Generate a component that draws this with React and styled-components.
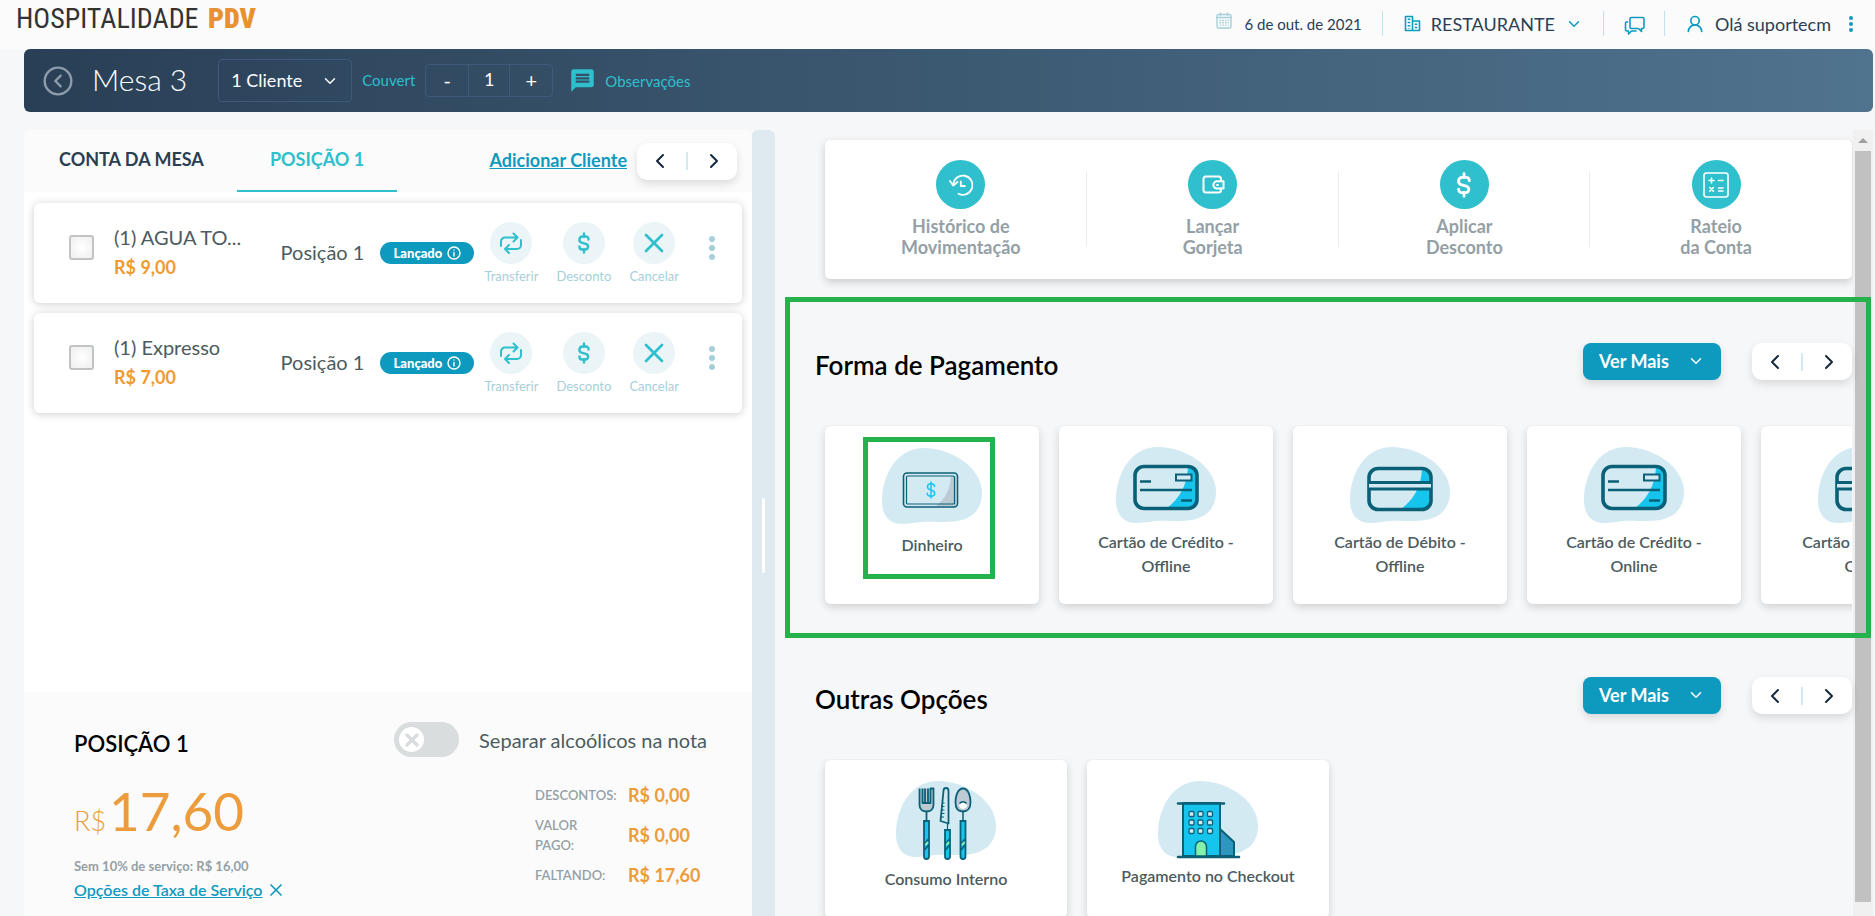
import React, { useState } from "react";
import styled, { createGlobalStyle, css } from "styled-components";
import { ChevronDown, ChevronLeft, ChevronRight, CircleChevronLeft, UserRound, X } from "lucide-react";
import { MdMessage } from "react-icons/md";

const colors = {
  page: "#f5f7f9",
  soft: "#fbfbfb",
  navy: "#2a3f54",
  teal: "#2fbfcd",
  blue: "#0e9abf",
  orange: "#ec9c3b",
  text: "#4b5b60",
  muted: "#94a0a6",
  pale: "#a5d0da",
  ink: "#0a6076",
  blob: "#d4eaf3",
  cyan: "#16c5ee",
  mark: "#24b24c",
};

const items = [
  { id: 1, name: "(1) AGUA TO...", price: "R$ 9,00" },
  { id: 2, name: "(1) Expresso", price: "R$ 7,00" },
];

const totals = [
  { label: "DESCONTOS:", value: "R$ 0,00" },
  { label: <>VALOR<br />PAGO:</>, value: "R$ 0,00" },
  { label: "FALTANDO:", value: "R$ 17,60" },
];

/* ---------- icons ---------- */

const Line = ({ size = 24, box = "0 0 24 24", width = 2, children, ...rest }) => (
  <svg
    width={size}
    height={size}
    viewBox={box}
    fill="none"
    stroke="currentColor"
    strokeWidth={width}
    strokeLinecap="round"
    strokeLinejoin="round"
    aria-hidden="true"
    {...rest}
  >
    {children}
  </svg>
);

const TransferIcon = () => (
  <Line size={22} box="0 0 22 22">
    <path d="M1 14V9.500a4 4 0 0 1 4-4h12.500M13.500 1.500l4 4-4 4" />
    <path d="M21 8v5a4 4 0 0 1-4 4H5M9 13l-4 4 4 4" />
  </Line>
);

const DollarIcon = ({ size = 22 }) => (
  <Line size={size} box="0 0 22 22" width={2.4}>
    <path d="M11 1.500v3M11 17.500v3" />
    <path d="M15.500 7.500V7A2.500 2.500 0 0 0 13 4.500H9.500a3.200 3.200 0 0 0-1 6.200l5 1.500a2.800 2.800 0 0 1-1 5.300H9A2.500 2.500 0 0 1 6.500 15v-.500" />
  </Line>
);

const HistoryIcon = () => (
  <Line size={24} width={1.8}>
    <path d="M9.500 20.700A9.600 9.600 0 1 0 4.300 11.500" />
    <path d="M1 8l3.200 4.500L8.500 9" />
    <path d="M11.800 8.500V13h4" />
  </Line>
);

const WalletIcon = () => (
  <Line size={24} width={2}>
    <path d="M20 8V6a2.500 2.500 0 0 0-2.500-2.500h-13A2.500 2.500 0 0 0 2.500 6v11a2.500 2.500 0 0 0 2.500 2.500h12.500A2.500 2.500 0 0 0 20 17v-1.500" />
    <path d="M22.500 8.300H16a3.600 3.600 0 0 0 0 7.200h6.500z" />
    <path d="M16 12h1" />
  </Line>
);

const CalcIcon = () => (
  <Line size={26} box="0 0 26 26" width={1.6}>
    <rect x="1" y="1" width="24" height="24" rx="2.500" />
    <path d="M6 8.500h5M8.500 6v5M15.500 8.500h4.500M6.800 15.500l3.600 3.600M10.400 15.500l-3.600 3.600M15.500 16h4.500M15.500 19h4.500" />
  </Line>
);

const CalendarIcon = () => (
  <Line size={17} box="0 0 17 17" width={1.4}>
    <rect x="1" y="2.500" width="14" height="13.500" rx="1.500" />
    <path d="M1 5.500h14M4.500 1v2.500M11.500 1v2.500" />
    <path d="M4 8.500h8.500M4 10.800h8.500M4 13.100h8.500" strokeDasharray="0.600 2.200" />
  </Line>
);

const PlaceIcon = () => (
  <Line size={17} box="0 0 17 17" width={1.6} strokeLinecap="butt">
    <path d="M1.500 1.500h7v14h-7zM8.500 6H15.500v9.500h-7" />
    <path d="M5 3.500v10M12 8.500v5" strokeDasharray="1.600 1.600" strokeWidth="2.600" />
  </Line>
);

const ChatIcon = () => (
  <Line size={21} box="0 0 21 21" width={1.6}>
    <path d="M7.500 2.500h11a1.500 1.500 0 0 1 1.500 1.500v8a1.500 1.500 0 0 1-1.500 1.500h-1v3l-3-3h-7A1.500 1.500 0 0 1 6 12V4a1.500 1.500 0 0 1 1.500-1.500z" />
    <path d="M3.500 7A1.500 1.500 0 0 0 1.500 8.500v6A1.500 1.500 0 0 0 3 16h1.500v3l3-3H12" />
  </Line>
);

const InfoIcon = () => (
  <Line size={14} box="0 0 14 14" width={1.4}>
    <circle cx="7" cy="7" r="6" />
    <path d="M7 6.500V10M7 4v.100" />
  </Line>
);

const DotsIcon = ({ gap = 9, r = 3 }) => (
  <svg width={r * 2} height={gap * 2 + r * 2} fill="currentColor" aria-hidden="true">
    <circle cx={r} cy={r} r={r} />
    <circle cx={r} cy={r + gap} r={r} />
    <circle cx={r} cy={r + gap * 2} r={r} />
  </svg>
);

/* ---------- illustrations ---------- */

const Blob = () => (
  <path
    fill={colors.blob}
    d="M42 0C70 0 100 20 100 45c0 18-12 27-28 28.500-14 1.200-22-.500-32 .500-8 .800-13 2-20 2C6 76 0 66 0 53 0 28 14 0 42 0z"
  />
);

const Art = ({ height = 76, top = 0, children }) => (
  <ArtSvg width="100" height={height} viewBox={`0 ${-top} 100 ${height}`} aria-hidden="true">
    <Blob />
    {children}
  </ArtSvg>
);

const MoneyArt = () => (
  <Art height={79} top={1}>
    <path d="M69 28h5v30H54c9-7 14-16 15-30z" fill="#bccad4" />
    <rect x="21.500" y="25" width="54" height="34" rx="3.500" fill="none" stroke={colors.ink} strokeWidth="1.600" />
    <rect x="24.500" y="28" width="48" height="28" rx="1" fill="none" stroke={colors.ink} strokeWidth="1.200" />
    <g fill="none" stroke={colors.cyan} strokeWidth="1.500" strokeLinecap="round">
      <path d="M49 34v16M52.500 38.500c0-2-1.500-2.800-3.500-2.800s-3.500 1-3.500 3 1.500 2.700 3.500 3.200 3.700 1.200 3.700 3.300-1.700 3-3.700 3-3.700-1-3.700-3" />
    </g>
  </Art>
);

const CreditArt = () => (
  <Art>
    <path d="M72 20h5a5 5 0 0 1 5 5v30a6 6 0 0 1-6 6H51c12-9 20-22 21-41z" fill={colors.cyan} />
    <rect x="19" y="19.500" width="62" height="42" rx="9" fill="none" stroke={colors.ink} strokeWidth="3.600" />
    <rect x="60" y="27.500" width="15.500" height="6" fill={colors.blob} stroke={colors.ink} strokeWidth="2" />
    <path d="M24 34.500h11M24 43h52M65 53.500h11" stroke={colors.ink} strokeWidth="2.400" />
  </Art>
);

const DebitArt = () => (
  <Art>
    <path d="M72 22h5a5 5 0 0 1 5 5v29a6 6 0 0 1-6 6H51c12-9 20-21 21-40z" fill={colors.cyan} />
    <rect x="19" y="21.500" width="62" height="41" rx="9" fill="none" stroke={colors.ink} strokeWidth="3.600" />
    <path d="M19 39h62" stroke={colors.blob} strokeWidth="4" />
    <path d="M19 35.500h62M19 42h62" stroke={colors.ink} strokeWidth="2.800" />
  </Art>
);

const Handle = ({ x, y }) => (
  <g>
    <path d={`M${x - 2.5} ${y}h5V75.500a2.500 2.500 0 0 1-5 0z`} fill={colors.cyan} stroke={colors.ink} strokeWidth="1.800" />
    <path d={`M${x - 2} 63l4-5M${x - 2} 69l4-5`} stroke={colors.ink} strokeWidth="1.800" />
    <path d={`M${x - 1} 64l2.500-3`} stroke="#83f0ab" strokeWidth="2" />
  </g>
);

const CutleryArt = () => (
  <Art height={79}>
    <g stroke={colors.ink} strokeWidth="1.800" strokeLinejoin="round">
      <path d="M23.500 7.500h14V24c0 4-3 6.500-7 6.500s-7-2.500-7-6.500z" fill="#bccad4" stroke="none" />
      <path d="M23.500 7.500V24c0 4 3 6.500 7 6.500s7-2.500 7-6.500V7.500h-3V22h-8V7.500M29 7.500V22M32 7.500V22M30.500 30.500V39" fill="none" />
      <path d="M47.500 10c0-4 5-4 5 0v32.500l-8-2.500z" fill={colors.blob} />
      <path d="M46 22h2.500M46 25.500h2.500M45.500 29h3M45.500 32.500h3M45 36h3M51.500 43v5" fill="none" strokeWidth="1.200" />
      <path d="M67 7.500c6 0 7.500 9 7.500 14 0 6-3 9-7.500 9s-7.500-3-7.500-9c0-5 1.500-14 7.500-14z" fill="#bccad4" />
      <path d="M63 25c1-5 7-5 8 0-2 4-6 4-8 0z" fill="#fff" stroke="none" />
      <path d="M63.500 22.500c2-2.500 5-2.500 7 0M67 31v8" fill="none" strokeWidth="1.500" />
    </g>
    <Handle x={30.5} y={40} />
    <Handle x={51.5} y={49} />
    <Handle x={67} y={40} />
  </Art>
);

const BuildingArt = () => (
  <Art>
    <g stroke={colors.ink} strokeWidth="2" strokeLinecap="round" strokeLinejoin="round">
      <path d="M62 48l14 13v14H62z" fill="#2c98bf" />
      <path d="M25 22h37v53H25z" fill={colors.cyan} />
      <path d="M20 22.500h46M20 76h61" strokeWidth="2.600" />
      <path d="M37.500 75V65.500a5.500 5.500 0 0 1 11 0V75z" fill="#83f0ab" strokeWidth="1.500" />
      <g fill={colors.blob} strokeWidth="1.300">
        {[33, 41.5, 50].map((y) =>
          [33.5, 42.5, 52].map((x) => (
            <rect key={`${x}-${y}`} x={x - 2.5} y={y - 2.5} width="5" height="5" rx="1.200" />
          ))
        )}
      </g>
    </g>
  </Art>
);

const quickActions = [
  { icon: <HistoryIcon />, lines: ["Histórico de", "Movimentação"] },
  { icon: <WalletIcon />, lines: ["Lançar", "Gorjeta"] },
  { icon: <DollarIcon size={26} />, lines: ["Aplicar", "Desconto"] },
  { icon: <CalcIcon />, lines: ["Rateio", "da Conta"] },
];

const payments = [
  { art: <MoneyArt />, lines: ["Dinheiro"], marked: true },
  { art: <CreditArt />, lines: ["Cartão de Crédito -", "Offline"] },
  { art: <DebitArt />, lines: ["Cartão de Débito -", "Offline"] },
  { art: <CreditArt />, lines: ["Cartão de Crédito -", "Online"] },
  { art: <DebitArt />, lines: ["Cartão de Débito -", "Online"] },
];

const others = [
  { art: <CutleryArt />, lines: ["Consumo Interno"] },
  { art: <BuildingArt />, lines: ["Pagamento no Checkout"] },
];

/* ---------- shared parts ---------- */

const ArrowPager = ({ label }) => (
  <PagerBox role="group" aria-label={label}>
    <PagerButton type="button" aria-label="Anterior">
      <ChevronLeft size={24} />
    </PagerButton>
    <PagerDivider />
    <PagerButton type="button" aria-label="Próximo">
      <ChevronRight size={24} />
    </PagerButton>
  </PagerBox>
);

const OptionSection = ({ title, options, cardWidth, cardHeight, highlighted }) => (
  <Section $highlighted={highlighted}>
    <SectionHead>
      <SectionTitle>{title}</SectionTitle>
      <MoreButton type="button">
        Ver Mais
        <ChevronDown size={18} />
      </MoreButton>
      <ArrowPager label={title} />
    </SectionHead>
    <CardStrip>
      {options.map(({ art, lines, marked }) => (
        <OptionCard type="button" key={lines.join(" ")} $width={cardWidth} $height={cardHeight}>
          {art}
          <OptionLabel>
            {lines.map((line) => (
              <span key={line}>{line}</span>
            ))}
          </OptionLabel>
          {marked && <CardMark />}
        </OptionCard>
      ))}
    </CardStrip>
    {highlighted && <SectionMark />}
  </Section>
);

const OrderItem = ({ item }) => (
  <ItemRow>
    <ItemCheck type="checkbox" aria-label={item.name} />
    <ItemInfo>
      <ItemName>{item.name}</ItemName>
      <ItemPrice>{item.price}</ItemPrice>
    </ItemInfo>
    <ItemPosition>Posição 1</ItemPosition>
    <Badge>
      Lançado
      <InfoIcon />
    </Badge>
    <ItemActions>
      <ItemAction type="button">
        <ActionCircle><TransferIcon /></ActionCircle>
        Transferir
      </ItemAction>
      <ItemAction type="button">
        <ActionCircle><DollarIcon /></ActionCircle>
        Desconto
      </ItemAction>
      <ItemAction type="button">
        <ActionCircle><X size={32} strokeWidth={2} /></ActionCircle>
        Cancelar
      </ItemAction>
    </ItemActions>
    <KebabButton type="button" aria-label="Mais opções">
      <DotsIcon />
    </KebabButton>
  </ItemRow>
);

function App() {
  const [count, setCount] = useState(1);

  return (
    <Shell>
      <GlobalStyle />

      <Header>
        <Logo>
          HOSPITALIDADE <strong>PDV</strong>
        </Logo>
        <DateInfo>
          <CalendarIcon />
          <span>6 de out. de 2021</span>
        </DateInfo>
        <HeaderDivider />
        <PlaceButton type="button">
          <PlaceIcon />
          <span>RESTAURANTE</span>
          <ChevronDown size={18} />
        </PlaceButton>
        <HeaderDivider />
        <HeaderIconButton type="button" aria-label="Mensagens">
          <ChatIcon />
        </HeaderIconButton>
        <HeaderDivider />
        <UserButton type="button">
          <UserRound size={20} />
          <span>Olá suportecm</span>
          <DotsIcon gap={6} r={2} />
        </UserButton>
      </Header>

      <TitleBar>
        <BackButton type="button" aria-label="Voltar">
          <CircleChevronLeft size={32} strokeWidth={1.8} />
        </BackButton>
        <TableName>Mesa 3</TableName>
        <ClientField>
          <ClientSelect aria-label="Clientes" defaultValue="1">
            <option value="1">1 Cliente</option>
            <option value="2">2 Clientes</option>
          </ClientSelect>
          <ChevronDown size={18} />
        </ClientField>
        <BarText>Couvert</BarText>
        <Counter>
          <CounterButton type="button" aria-label="Diminuir" onClick={() => setCount(Math.max(0, count - 1))}>
            -
          </CounterButton>
          <CounterValue>{count}</CounterValue>
          <CounterButton type="button" aria-label="Aumentar" onClick={() => setCount(count + 1)}>
            +
          </CounterButton>
        </Counter>
        <NotesButton type="button">
          <MdMessage size={27} />
          Observações
        </NotesButton>
      </TitleBar>

      <Body>
        <AccountPanel>
          <TabBar>
            <Tab type="button">CONTA DA MESA</Tab>
            <Tab type="button" $active>POSIÇÃO 1</Tab>
            <AddLink href="#cliente">Adicionar Cliente</AddLink>
            <ArrowPager label="Posições" />
          </TabBar>

          <ItemList>
            {items.map((item) => (
              <OrderItem key={item.id} item={item} />
            ))}
          </ItemList>

          <Summary>
            <SummaryTop>
              <SummaryTitle>POSIÇÃO 1</SummaryTitle>
              <ToggleLabel>
                <ToggleInput type="checkbox" />
                <ToggleTrack>
                  <ToggleThumb><X size={20} strokeWidth={4} /></ToggleThumb>
                </ToggleTrack>
                Separar alcoólicos na nota
              </ToggleLabel>
            </SummaryTop>
            <SummaryBottom>
              <div>
                <Amount><small>R$</small>17,60</Amount>
                <ServiceText>Sem 10% de serviço: R$ 16,00</ServiceText>
                <ServiceRow>
                  <ServiceLink href="#taxa">Opções de Taxa de Serviço</ServiceLink>
                  <ClearButton type="button" aria-label="Remover taxa">
                    <X size={20} />
                  </ClearButton>
                </ServiceRow>
              </div>
              <Totals>
                <tbody>
                  {totals.map(({ label, value }, i) => (
                    <tr key={i}>
                      <th scope="row">{label}</th>
                      <td>{value}</td>
                    </tr>
                  ))}
                </tbody>
              </Totals>
            </SummaryBottom>
          </Summary>
        </AccountPanel>

        <Splitter>
          <SplitterGrip />
        </Splitter>

        <Main>
          <MainContent>
            <QuickCard>
              {quickActions.map(({ icon, lines }) => (
                <QuickAction type="button" key={lines[0]}>
                  <QuickCircle>{icon}</QuickCircle>
                  {lines.map((line) => (
                    <span key={line}>{line}</span>
                  ))}
                </QuickAction>
              ))}
            </QuickCard>
            <OptionSection title="Forma de Pagamento" options={payments} cardWidth={214} cardHeight={178} highlighted />
            <OptionSection title="Outras Opções" options={others} cardWidth={242} cardHeight={158} />
          </MainContent>
          <ScrollTrack>
            <ScrollArrow />
            <ScrollThumb />
          </ScrollTrack>
        </Main>
      </Body>
    </Shell>
  );
}

const GlobalStyle = createGlobalStyle`
  *, *::before, *::after {
    box-sizing: border-box;
  }

  body {
    margin: 0;
    background: ${colors.page};
    color: ${colors.text};
    font-family: Lato, "Open Sans", sans-serif;
  }

  button, select {
    font: inherit;
    color: inherit;
    background: none;
    border: 0;
    padding: 0;
    cursor: pointer;
  }

  svg {
    display: block;
    flex: none;
  }
`;

const Shell = styled.div`
  display: flex;
  flex-direction: column;
  height: 100vh;
  overflow: hidden;
`;

/* header */

const Header = styled.header`
  display: flex;
  align-items: center;
  flex: none;
  height: 49px;
  padding: 0 22px 2px 16px;
  background: ${colors.soft};
  color: ${colors.navy};
  font-size: 18px;

  svg {
    color: ${colors.blue};
  }
`;

const Logo = styled.div`
  align-self: flex-start;
  margin-right: auto;
  font: 400 28px/38px "Roboto Condensed", "Roboto", sans-serif;
  color: #333;

  strong {
    margin-left: 3px;
    font-weight: 900;
    color: #e7922e;
  }
`;

const DateInfo = styled.div`
  display: flex;
  gap: 12px;
  margin-right: 20px;
  font-size: 15px;
  line-height: 24px;

  svg {
    color: ${colors.pale};
  }
`;

const HeaderDivider = styled.span`
  width: 1px;
  height: 25px;
  background: #bfe3ea;
`;

const PlaceButton = styled.button`
  display: flex;
  align-items: center;
  gap: 10px;
  margin: 0 20px 0 21px;
`;

const HeaderIconButton = styled.button`
  margin: 4px 19px 0 20px;
`;

const UserButton = styled.button`
  display: flex;
  align-items: center;
  gap: 10px;
  margin-left: 20px;

  span {
    margin-right: 8px;
  }
`;

/* title bar */

const TitleBar = styled.div`
  display: flex;
  align-items: center;
  flex: none;
  height: 63px;
  margin: 0 2px 0 24px;
  padding-left: 18px;
  border-radius: 6px;
  background: linear-gradient(90deg, #293f56, #50738e);
  color: #fff;
`;

const BackButton = styled.button`
  color: #8d9cab;
`;

const TableName = styled.h1`
  margin: 0 31px 0 18px;
  padding-bottom: 4px;
  font-size: 30px;
  font-weight: 300;
`;

const ClientField = styled.div`
  display: flex;
  align-items: center;
  width: 134px;
  height: 43px;
  margin-right: 10px;
  border: 1px solid #40597a;
  border-radius: 4px;
  font-size: 18px;

  svg {
    margin: 0 12px 0 -30px;
    pointer-events: none;
  }
`;

const ClientSelect = styled.select`
  flex: 1;
  height: 100%;
  padding: 0 0 2px 12px;
  appearance: none;
  outline: none;
`;

const BarText = styled.span`
  padding-bottom: 2px;
  font-size: 15px;
  color: ${colors.teal};
`;

const Counter = styled.div`
  display: grid;
  grid-template-columns: repeat(3, 1fr);
  width: 128px;
  height: 33px;
  margin: 0 16px 0 10px;
  border: 1px solid #40597a;
  border-radius: 4px;
  font-size: 18px;
`;

const CounterButton = styled.button`
  padding-bottom: 2px;
  font-size: 20px;
  line-height: 24px;
`;

const CounterValue = styled.output`
  border: solid #40597a;
  border-width: 0 1px;
  line-height: 29px;
  text-align: center;
`;

const NotesButton = styled.button`
  display: flex;
  align-items: center;
  gap: 9px;
  font-size: 15px;
  color: ${colors.teal};
`;

/* left panel */

const Body = styled.div`
  display: flex;
  flex: 1;
  min-height: 0;
  padding: 18px 2px 0 24px;
`;

const AccountPanel = styled.section`
  display: flex;
  flex-direction: column;
  flex: 728 1 0;
  min-width: 0;
  background: #fff;
  border-radius: 6px 6px 0 0;
`;

const TabBar = styled.div`
  display: flex;
  align-items: center;
  height: 62px;
  padding: 0 15px 0 2px;
  background: ${colors.soft};
  border-radius: 6px 6px 0 0;
`;

const Tab = styled.button`
  align-self: stretch;
  padding: 0 33px 2px;
  border-bottom: 2px solid transparent;
  font-size: 18px;
  font-weight: 700;
  color: ${colors.navy};

  ${({ $active }) =>
    $active &&
    css`
      border-color: ${colors.teal};
      color: ${colors.teal};
    `}
`;

const AddLink = styled.a`
  margin: 0 10px 0 auto;
  padding-bottom: 3px;
  font-size: 18px;
  font-weight: 700;
  color: ${colors.blue};
`;

const PagerBox = styled.div`
  display: flex;
  align-items: center;
  justify-content: space-between;
  width: 100px;
  height: 37px;
  padding: 0 11px;
  border-radius: 10px;
  background: #fff;
  box-shadow: 0 4px 8px rgba(0, 0, 0, 0.12);
`;

const PagerButton = styled.button`
  color: #15293c;
`;

const PagerDivider = styled.span`
  width: 2px;
  height: 18px;
  background: ${colors.blob};
`;

const ItemList = styled.div`
  display: flex;
  flex-direction: column;
  flex: 1;
  gap: 10px;
  min-height: 0;
  padding: 11px 10px;
`;

const ItemRow = styled.article`
  display: flex;
  align-items: center;
  height: 100px;
  padding: 0 27px 0 35px;
  border-radius: 6px;
  background: #fff;
  box-shadow: 0 1px 8px rgba(0, 0, 0, 0.2);
`;

const ItemCheck = styled.input`
  appearance: none;
  flex: none;
  width: 25px;
  height: 25px;
  margin: 0 20px 12px 0;
  border: 2px solid #c0c4c4;
  border-radius: 3px;
  background: radial-gradient(#fff, #efefef);
`;

const ItemInfo = styled.div`
  flex: 1;
  min-width: 0;
  padding-bottom: 2px;
  line-height: 30px;
`;

const ItemName = styled.div`
  overflow: hidden;
  white-space: nowrap;
  font-size: 20px;
`;

const ItemPrice = styled.div`
  font-size: 18px;
  font-weight: 700;
  color: #f09a2f;
`;

const ItemPosition = styled.span`
  margin-right: 16px;
  padding-bottom: 2px;
  white-space: nowrap;
  font-size: 20px;
`;

const Badge = styled.span`
  display: flex;
  align-items: center;
  justify-content: center;
  gap: 5px;
  width: 94px;
  height: 22px;
  margin-right: 10px;
  border-radius: 11px;
  background: ${colors.blue};
  color: #fff;
  font-size: 13px;
  font-weight: 900;
`;

const ItemActions = styled.div`
  display: flex;
  gap: 18px;
  margin-right: 30px;
`;

const ItemAction = styled.button`
  display: flex;
  flex-direction: column;
  align-items: center;
  gap: 4px;
  font-size: 13px;
  line-height: 16px;
  color: ${colors.pale};
`;

const ActionCircle = styled.span`
  display: grid;
  place-items: center;
  width: 42px;
  height: 42px;
  border-radius: 50%;
  background: #ebf5f8;
  color: ${colors.teal};
`;

const KebabButton = styled.button`
  margin-bottom: 10px;
  color: ${colors.pale};
`;

/* account summary */

const Summary = styled.footer`
  height: 224px;
  padding: 30px 45px 0 50px;
  background: ${colors.soft};
`;

const SummaryTop = styled.div`
  display: flex;
  align-items: flex-end;
  justify-content: space-between;
`;

const SummaryTitle = styled.h2`
  margin: 0;
  font-size: 22px;
  font-weight: 600;
  line-height: 26px;
  color: #000;
`;

const ToggleLabel = styled.label`
  display: flex;
  align-items: center;
  font-size: 20px;
`;

const ToggleInput = styled.input`
  position: absolute;
  opacity: 0;
`;

const ToggleTrack = styled.span`
  display: flex;
  align-items: center;
  width: 65px;
  height: 35px;
  margin-right: 20px;
  padding: 0 5px;
  border-radius: 18px;
  background: #d9dddd;

  ${ToggleInput}:checked + & {
    justify-content: flex-end;
    background: ${colors.teal};
  }
`;

const ToggleThumb = styled.span`
  display: grid;
  place-items: center;
  width: 25px;
  height: 25px;
  border-radius: 50%;
  background: #fff;
  color: #d9dddd;
`;

const SummaryBottom = styled.div`
  display: flex;
  align-items: flex-start;
  justify-content: space-between;
  margin-top: 18px;
`;

const Amount = styled.div`
  margin: 5px 0 13px;
  font-size: 53px;
  line-height: 62px;
  color: ${colors.orange};

  small {
    margin-right: 3px;
    font-size: 27px;
    font-weight: 300;
    line-height: 1;
  }
`;

const ServiceText = styled.div`
  font-size: 13px;
  font-weight: 700;
  line-height: 22px;
  color: ${colors.muted};
`;

const ServiceRow = styled.div`
  display: flex;
  align-items: center;
  gap: 3px;
  line-height: 26px;
`;

const ServiceLink = styled.a`
  font-size: 16px;
  font-weight: 600;
  color: ${colors.blue};
`;

const ClearButton = styled.button`
  color: ${colors.blue};
`;

const Totals = styled.table`
  width: 172px;
  border-spacing: 0;

  tr {
    height: 40px;
  }

  th,
  td {
    padding: 0;
    text-align: left;
    white-space: nowrap;
  }

  th {
    width: 93px;
    font-size: 13px;
    font-weight: 600;
    line-height: 20px;
    color: ${colors.muted};
  }

  td {
    font-size: 18px;
    font-weight: 700;
    color: ${colors.orange};
  }
`;

const Splitter = styled.div`
  display: flex;
  align-items: center;
  justify-content: center;
  width: 23px;
  padding-top: 24px;
  border-radius: 6px 6px 0 0;
  background: #dfeaf0;
`;

const SplitterGrip = styled.span`
  width: 3px;
  height: 75px;
  border-radius: 2px;
  background: #fff;
`;

/* right side */

const Main = styled.main`
  display: flex;
  flex: 1098 1 0;
  min-width: 0;
`;

const MainContent = styled.div`
  flex: 1;
  min-width: 0;
  padding: 10px 1px 0 40px;
`;

const QuickCard = styled.div`
  display: grid;
  grid-template-columns: repeat(4, 1fr);
  align-items: start;
  height: 139px;
  margin-left: 10px;
  padding: 20px 10px 0;
  border-radius: 5px;
  background: #fff;
  box-shadow: 0 3px 8px rgba(0, 0, 0, 0.18);
`;

const QuickAction = styled.button`
  display: flex;
  flex-direction: column;
  align-items: center;
  font-size: 18px;
  font-weight: 700;
  line-height: 21px;
  color: ${colors.muted};
  background: linear-gradient(#e9eced, #e9eced) right 12px / 1px 75px no-repeat;

  &:last-child {
    background: none;
  }
`;

const QuickCircle = styled.span`
  display: grid;
  place-items: center;
  width: 49px;
  height: 49px;
  margin-bottom: 7px;
  border-radius: 50%;
  background: ${colors.teal};
  color: #fff;
`;

const Section = styled.section`
  position: relative;
  margin-top: ${({ $highlighted }) => ($highlighted ? "18px" : "39px")};
  padding-top: ${({ $highlighted }) => ($highlighted ? "46px" : "0")};
`;

const SectionHead = styled.div`
  display: flex;
  align-items: center;
  margin-bottom: 45px;
`;

const SectionTitle = styled.h2`
  margin: 7px auto 0 0;
  font-size: 26px;
  font-weight: 600;
  line-height: 30px;
  color: #000;
`;

const MoreButton = styled.button`
  display: flex;
  align-items: center;
  justify-content: space-between;
  width: 138px;
  height: 37px;
  margin-right: 31px;
  padding: 0 16px 2px;
  border-radius: 8px;
  background: ${colors.blue};
  box-shadow: 0 4px 8px rgba(0, 0, 0, 0.12);
  color: #fff;
  font-size: 18px;
  font-weight: 700;
`;

const CardStrip = styled.div`
  display: flex;
  gap: 20px;
  overflow: hidden;
  padding: 1px 0 34px 10px;
`;

const OptionCard = styled.button`
  position: relative;
  display: flex;
  flex-direction: column;
  align-items: center;
  flex: none;
  gap: 7px;
  width: ${({ $width }) => $width}px;
  height: ${({ $height }) => $height}px;
  padding-top: 21px;
  border-radius: 6px;
  background: #fff;
  box-shadow: 0 3px 8px rgba(0, 0, 0, 0.16);
`;

const ArtSvg = styled.svg`
  overflow: visible;
`;

const OptionLabel = styled.span`
  display: flex;
  flex-direction: column;
  font-size: 16px;
  font-weight: 600;
  line-height: 24px;
  color: ${colors.text};
`;

const CardMark = styled.span`
  position: absolute;
  top: 11px;
  left: 38px;
  width: 132px;
  height: 142px;
  border: 5px solid ${colors.mark};
`;

const SectionMark = styled.span`
  position: absolute;
  z-index: 1;
  inset: 0 -19px 0 -30px;
  border: 5px solid ${colors.mark};
  pointer-events: none;
`;

const ScrollTrack = styled.div`
  display: flex;
  flex-direction: column;
  align-items: center;
  width: 20px;
  padding: 8px 0 14px;
  background: #f0f0f0;
`;

const ScrollArrow = styled.span`
  margin-bottom: 8px;
  border: 5px solid transparent;
  border-top: 0;
  border-bottom-color: #a0a0a0;
`;

const ScrollThumb = styled.span`
  flex: 1;
  width: 16px;
  background: #c1c1c1;
`;

export default App;
